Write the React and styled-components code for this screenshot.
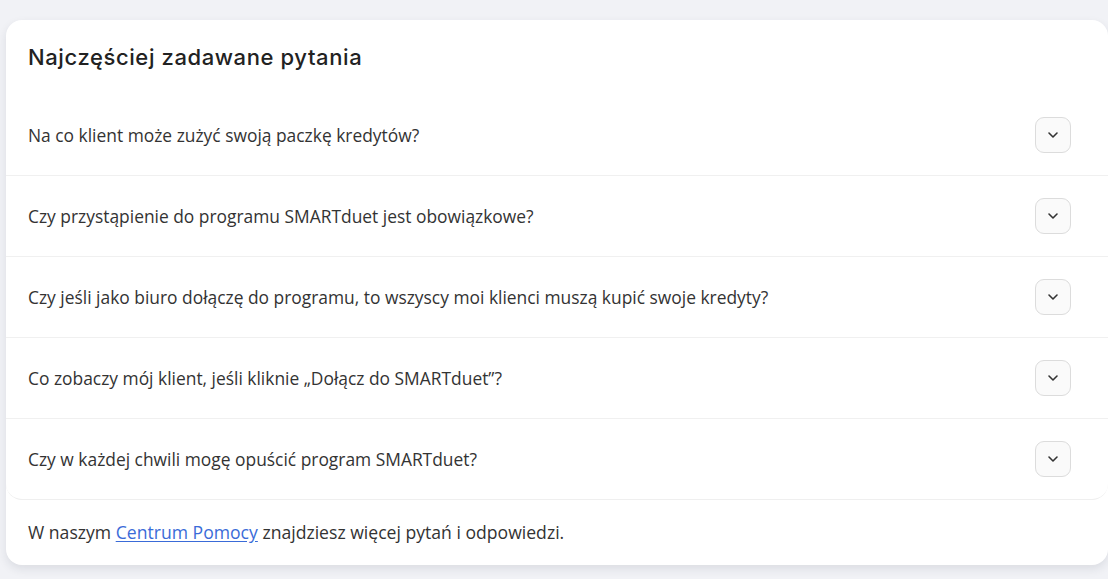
import React from "react";
import styled, { createGlobalStyle } from "styled-components";

const GlobalStyle = createGlobalStyle`
  html, body {
    margin: 0;
    padding: 0;
    background: #f1f2f6;
  }
  body {
    font-family: "Open Sans", "Noto Sans", sans-serif;
    color: #333;
  }
`;

const Page = styled.div`
  padding: 20px 0 0 6px;
  height: 579px;
  box-sizing: border-box;
  overflow: hidden;
`;

const Card = styled.section`
  width: 1102px;
  background: #fff;
  border-radius: 16px;
  box-shadow: 0 4px 10px rgba(30, 35, 60, 0.1);
  display: flex;
  flex-direction: column;
`;

const Title = styled.h2`
  margin: 0;
  padding: 23px 22px 24px;
  font-family: "Inter", "Lato", sans-serif;
  font-weight: 500;
  font-size: 22px;
  line-height: 28px;
  color: #222;
  letter-spacing: 0.6px;
`;

const List = styled.div`
  display: flex;
  flex-direction: column;
  border-bottom: 1px solid #efefef;
  border-radius: 0 0 16px 16px;
`;

const Row = styled.div`
  display: flex;
  align-items: center;
  justify-content: space-between;
  padding: 22px 37px 22px 22px;
  border-top: ${(p) => (p.$first ? "none" : "1px solid #f0f0f0")};
`;

const Question = styled.span`
  font-size: 17.4px;
  line-height: 22px;
  color: #333;
`;

const Toggle = styled.button`
  width: 36px;
  height: 36px;
  border-radius: 9px;
  border: 1px solid #dcdcdc;
  background: #fafafa;
  display: flex;
  align-items: center;
  justify-content: center;
  padding: 0;
  cursor: pointer;
`;

const Footer = styled.p`
  margin: 0;
  padding: 21px 22px 22px;
  font-size: 17.6px;
  line-height: 22px;
  color: #333;
`;

const Link = styled.a`
  color: #3a6bd8;
  text-decoration: underline;
  text-underline-offset: 2px;
`;

const Chevron = () => (
  <svg width="12" height="8" viewBox="0 0 12 8" fill="none">
    <path d="M2 2l4 4 4-4" stroke="#333" strokeWidth="1.6" strokeLinecap="round" strokeLinejoin="round" />
  </svg>
);

const questions = [
  "Na co klient może zużyć swoją paczkę kredytów?",
  "Czy przystąpienie do programu SMARTduet jest obowiązkowe?",
  "Czy jeśli jako biuro dołączę do programu, to wszyscy moi klienci muszą kupić swoje kredyty?",
  "Co zobaczy mój klient, jeśli kliknie „Dołącz do SMARTduet”?",
  "Czy w każdej chwili mogę opuścić program SMARTduet?",
];

export default function App() {
  return (
    <>
      <GlobalStyle />
      <Page>
        <Card>
          <Title>Najczęściej zadawane pytania</Title>
          <List>
            {questions.map((q, i) => (
              <Row key={i} $first={i === 0}>
                <Question>{q}</Question>
                <Toggle aria-label="Rozwiń">
                  <Chevron />
                </Toggle>
              </Row>
            ))}
          </List>
          <Footer>
            W naszym <Link href="#">Centrum Pomocy</Link> znajdziesz więcej pytań i odpowiedzi.
          </Footer>
        </Card>
      </Page>
    </>
  );
}
